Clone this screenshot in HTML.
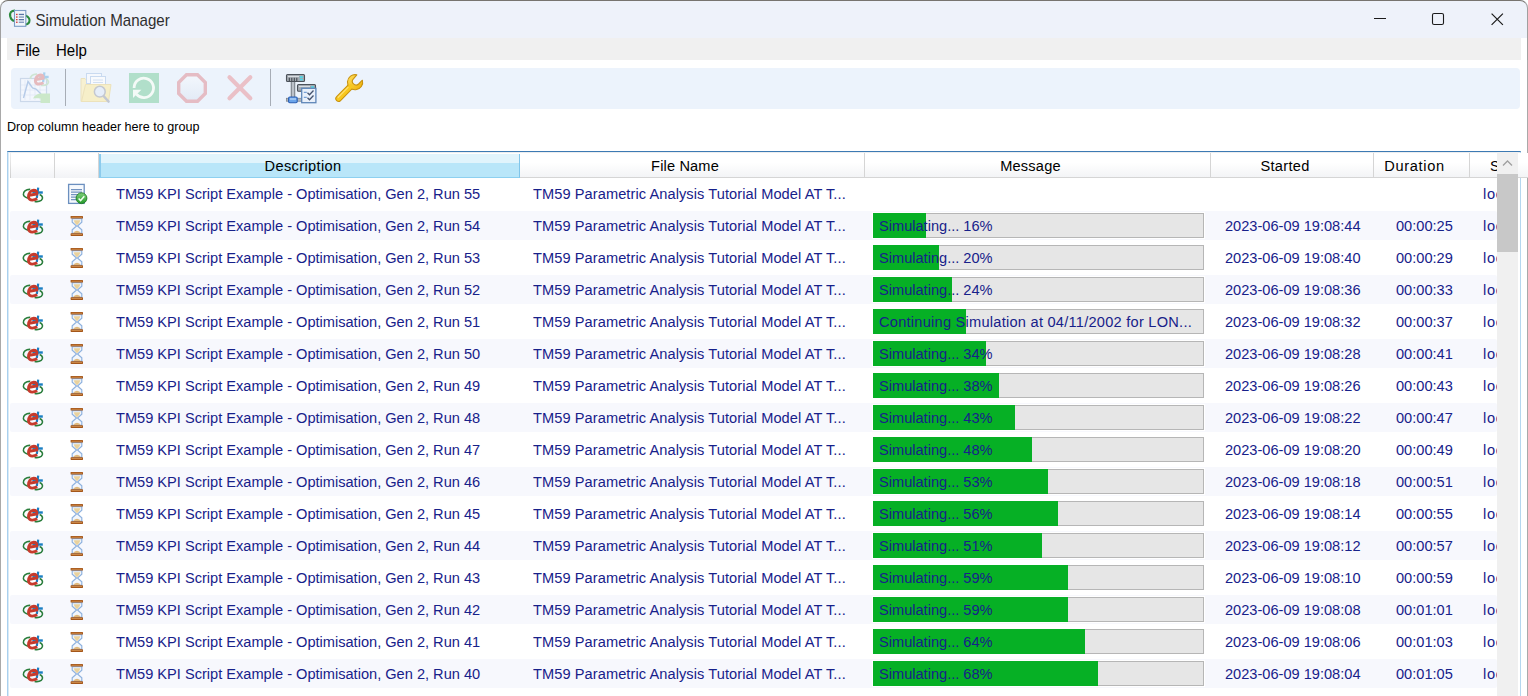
<!DOCTYPE html><html><head><meta charset="utf-8"><title>Simulation Manager</title><style>*{margin:0;padding:0;box-sizing:border-box}
html,body{width:1528px;height:696px;overflow:hidden;background:#fff;font-family:"Liberation Sans",sans-serif}
#win{position:absolute;left:0;top:0;width:1528px;height:696px;background:#fff;overflow:hidden}
#bl{position:absolute;left:0;top:8px;width:1px;height:700px;background:#a9a9a9}
#br{position:absolute;left:1527px;top:8px;width:1px;height:700px;background:#a9a9a9}
#title{position:absolute;left:0;top:0;width:1528px;height:38px;background:#eef2fa;border-radius:8px 8px 0 0}
#ttop{position:absolute;left:0;top:0;width:1528px;height:60px;border:1px solid #a0a0a0;border-top-color:#77746f;border-bottom:none;border-radius:8px 8px 0 0}
.appicon{position:absolute;left:0;top:0}
.ttext{position:absolute;left:35.5px;top:5px;font-size:15.1px;line-height:32px;color:#2e2e2e;white-space:nowrap;transform:scaleY(1.06);transform-origin:0 21px}
.wc{position:absolute}
#menu{position:absolute;left:7px;top:38px;width:1514px;height:22px;background:#f0f0f0}
#menu span{position:absolute;top:-3px;font-size:15px;line-height:32px;color:#000;white-space:nowrap;transform:scaleY(1.06);transform-origin:0 21px}
#tb{position:absolute;left:11px;top:68px;width:1509px;height:41px;background:#ecf3fc;border-radius:4px}
#drop{position:absolute;left:7px;top:113px;font-size:12.6px;line-height:28px;color:#000;white-space:nowrap;transform:scaleY(1.06);transform-origin:0 19px}
#gtop{position:absolute;left:7px;top:151px;width:1514px;height:1px;background:#3d7ab3;border-radius:2px 2px 0 0}
#gl{position:absolute;left:7px;top:152px;width:2px;height:560px;background:linear-gradient(90deg,#a9d0ee 0,#a9d0ee 50%,#d8eaf7 50%)}
#gr{position:absolute;left:1520px;top:152px;width:1px;height:560px;background:#b5d6ef}
.hc{position:absolute;top:153px;height:25px;background:linear-gradient(#ffffff 0,#ffffff 40%,#f3f4f6 100%);border-right:1px solid #d5d5d5;border-bottom:1px solid #d5d5d5}
.hc span{position:absolute;left:0;right:14px;top:-3px;text-align:center;font-size:14.6px;line-height:32px;color:#000;white-space:nowrap;transform:scaleY(1.06);transform-origin:0 21px}
.hc.sel{background:linear-gradient(#e1f4fc 0,#e1f4fc 9px,#b9e6f9 9px,#b9e6f9 100%);border-left:2px solid #8ccbed;border-right:1px solid #80c5ea;border-bottom:1px solid #8dd0f0;top:154px;height:24px}
.hc.sel span{top:-4px}
.row{position:absolute;left:10px;width:1487px;height:32px}
.row.alt::before{content:"";position:absolute;left:0;right:0;top:1px;height:29px;background:#f7f8fd;border-radius:2px}
.t{position:absolute;top:0px;font-size:14.6px;line-height:32px;color:#17218a;white-space:nowrap;transform:scaleY(1.06);transform-origin:0 21px}
.desc{left:106px}
.fn{left:523px;letter-spacing:0.08px}
.st{left:1215px}
.du{left:1386px}
.lo{left:1473px;letter-spacing:0.7px}
.ic0{position:absolute;left:8px;top:4px;width:32px;height:24px}
.ic1{position:absolute;left:52px;top:2px;width:32px;height:28px}
.ic1.hg{left:54px;top:2px}
.pb{position:absolute;left:863px;top:3px;width:331px;height:25px;background:#e6e6e6;border:1px solid #b6b6b6;box-shadow:0 0 0 1px #fff}
.pg{position:absolute;left:-1px;top:-1px;height:25px;background:#06b025}
.pt{position:absolute;left:5px;top:-4px;font-size:14.6px;line-height:32px;color:#17218a;white-space:nowrap;transform:scaleY(1.06);transform-origin:0 21px}
#sb{position:absolute;left:1497px;top:152px;width:21px;height:560px;background:#f0f0f0}
#thumb{position:absolute;left:0;top:22px;width:21px;height:78px;background:#c8c8c8}
.pt.wide{letter-spacing:0.25px}
.hc span.s{left:auto;right:auto;left:20px;text-align:left}
#hline{position:absolute;left:9px;top:152px;width:1511px;height:1px;background:#ebedef}
.hc.nb{border-bottom:none;background:linear-gradient(#ffffff 0,#ffffff 40%,#f2f3f6 100%)}
#sep0{position:absolute;left:10px;top:153px;width:1px;height:25px;background:linear-gradient(#f0f0f0,#cfcfcf)}
</style></head><body><div id="win"><div id="bl"></div><div id="br"></div><div id="title"><svg class="appicon" width="40" height="38" viewBox="0 0 40 38"><path d="M15 10.6C11 10.6 9.6 13 10.2 16.2C10.8 18.8 12.6 20.6 14.5 21" fill="none" stroke="#2b8a3e" stroke-width="2.2"/><path d="M25.5 15.5C29 17 30.2 19.8 29.2 22.2C28.2 24.6 24.5 25.2 20 24.6" fill="none" stroke="#2b8a3e" stroke-width="2.2"/><rect x="14.5" y="10.5" width="11.3" height="15.8" fill="#f2f6fb" stroke="#7b9cc6" stroke-width="1.1"/><rect x="16" y="13.8" width="1.6" height="1.3" fill="#d23c3c"/><rect x="18.8" y="13.8" width="5.2" height="1.3" fill="#5876a6"/><rect x="16" y="16.4" width="1.6" height="1.3" fill="#d23c3c"/><rect x="18.8" y="16.4" width="5.2" height="1.3" fill="#7d95bb"/><rect x="16" y="19" width="1.6" height="1.3" fill="#d23c3c"/><rect x="18.8" y="19" width="5.2" height="1.3" fill="#5876a6"/><rect x="16" y="21.6" width="1.6" height="1.3" fill="#d23c3c"/><rect x="18.8" y="21.6" width="5.2" height="1.3" fill="#7d95bb"/></svg><span class="ttext">Simulation Manager</span><svg class="wc" style="left:1373px;top:12px" width="14" height="14"><line x1="1" y1="6.5" x2="13" y2="6.5" stroke="#1b1b1b" stroke-width="1"/></svg><svg class="wc" style="left:1431px;top:12px" width="15" height="15"><rect x="1.5" y="1.5" width="11" height="11" rx="1.6" fill="none" stroke="#1b1b1b" stroke-width="1.1"/></svg><svg class="wc" style="left:1490px;top:12px" width="15" height="15"><path d="M1.6 1.6L12.9 12.9M12.9 1.6L1.6 12.9" stroke="#1b1b1b" stroke-width="1.2"/></svg></div><div id="ttop"></div><div id="menu"><span style="left:9px">File</span><span style="left:49px">Help</span></div><div id="tb"></div>
<svg id="tbsvg" width="400" height="50" viewBox="0 64 400 50" style="position:absolute;left:0;top:64px">
<defs>
<linearGradient id="srv" x1="0" y1="0" x2="0" y2="1"><stop offset="0" stop-color="#dfe3e8"/><stop offset="1" stop-color="#9aa1aa"/></linearGradient>
<linearGradient id="wr" x1="0" y1="0" x2="1" y2="1"><stop offset="0" stop-color="#ffe060"/><stop offset="1" stop-color="#f0b000"/></linearGradient>
</defs>
<!-- chart icon (disabled) -->
<rect x="20.5" y="78.5" width="26" height="23" fill="#f3f7fd" stroke="#cbd8ea" stroke-width="1.2"/>
<path d="M25 80V100M30 80V100M35 80V100M40 80V100M21 85H46M21 90H46M21 95H46" stroke="#e1e9f5" stroke-width="0.8"/>
<path d="M23.5 98L28 81.5L32.5 88L36 89L41 94" fill="none" stroke="#b6cbe8" stroke-width="1.4"/>
<g transform="translate(25.6 67.2) scale(0.93)">
<path d="M12.2 7.4C8 7.2 4.8 9.6 5.4 12.6M21.6 12.6C24.8 13.8 25.4 16.6 23.2 18.4C21.6 19.5 19.2 19.8 16.6 19.4" stroke="#cfe5d3" stroke-width="2" fill="none"/>
<ellipse cx="16.4" cy="10.6" rx="2" ry="1.3" fill="#b0d4ee"/>
<path d="M20.2 5.6L18.8 16.2" stroke="#a9d1ee" stroke-width="2.4" fill="none"/><path d="M19 10.5H24.8" stroke="#a9d1ee" stroke-width="2.6" fill="none"/>
<path d="M11.2 13.3L18.8 11.9C19.4 9.1 17.6 8.3 15.8 8.3C12.5 8.5 10.5 11.5 10.5 14.6C10.5 17.4 12.6 18.2 14.4 18.1C16 18 17.6 17.5 19.2 16.7" stroke="#e6babd" stroke-width="3.2" fill="none"/>
</g>
<path d="M33 98.5C34.5 95 38 93.5 41 93.5H50V103H40.5V98.5C37.5 98.2 35 98.3 33 98.5Z" fill="#cbe8c9"/>
<line x1="65.5" y1="69" x2="65.5" y2="106" stroke="#a7adb6" stroke-width="1"/>
<!-- folder search (disabled) -->
<path d="M81 78.5H85L86.5 80H100V101.5H81Z" fill="#f7f1d2" stroke="#ebe2bf" stroke-width="1"/>
<rect x="86.5" y="73.5" width="15" height="10" fill="#f5f8fd" stroke="#c9daf0" stroke-width="1"/>
<rect x="90.5" y="76.5" width="15" height="9" fill="#f8fafd" stroke="#c9daf0" stroke-width="1"/>
<path d="M93 80H103M93 82.5H103" stroke="#d2e0f2" stroke-width="1"/>
<path d="M85.5 84.5H111L108.5 101.5H81.5Z" fill="#f6efc9" stroke="#ece2bb" stroke-width="1"/>
<path d="M104 96.5L108.5 101.5" stroke="#c3c8d2" stroke-width="2.6" stroke-linecap="round"/>
<circle cx="99.8" cy="91.7" r="5.4" fill="#e6eef9" stroke="#c4c8d0" stroke-width="1.5"/>
<!-- refresh (disabled) -->
<rect x="129" y="73" width="30" height="30" fill="#b1dfca"/>
<path d="M134.1 88A9.7 9.7 0 1 1 136.4 94.2" fill="none" stroke="#f4faf7" stroke-width="2.8"/>
<path d="M133 98L133 89.8L141.4 89.8Z" fill="#f4faf7"/>
<!-- stop (disabled) -->
<defs><linearGradient id="oct" x1="0" y1="0" x2="0" y2="1"><stop offset="0" stop-color="#f3f7fd"/><stop offset="1" stop-color="#e2eaf6"/></linearGradient></defs>
<path d="M186.5 74.7H197.5L205.3 82.5V93.5L197.5 101.3H186.5L178.7 93.5V82.5Z" fill="url(#oct)" stroke="#e5bcc4" stroke-width="3.4" stroke-linejoin="miter"/>
<!-- X (disabled) -->
<path d="M229.5 77.3L250.3 98.3M250.3 77.3L229.5 98.3" stroke="#eac0c7" stroke-width="4.2" stroke-linecap="round"/>
<line x1="270.5" y1="69" x2="270.5" y2="106" stroke="#a7adb6" stroke-width="1"/>
<!-- network icon -->
<rect x="291.2" y="81" width="3.6" height="17" fill="#bcc2ca" stroke="#5d636b" stroke-width="0.8"/>
<rect x="286.3" y="98.2" width="16" height="3" fill="#b0b6be" stroke="#6d737b" stroke-width="0.6"/>
<rect x="286.5" y="74.5" width="18" height="7" rx="1" fill="#a3a9b1" stroke="#4c525a" stroke-width="1.1"/>
<rect x="288" y="76" width="11" height="1.1" fill="#dadee2"/>
<path d="M289.3 77.8V81M291.8 77.8V81M294.3 77.8V81M296.8 77.8V81" stroke="#3a4046" stroke-width="1"/>
<rect x="299.8" y="76.2" width="3" height="1.8" fill="#4fd8e8"/><rect x="299.8" y="78.8" width="3" height="1.6" fill="#4fd8e8"/>
<rect x="288.6" y="97" width="8.6" height="5.8" rx="1.2" fill="#6aa4ea" stroke="#2a5fb4" stroke-width="1.1"/>
<rect x="290" y="98.2" width="6" height="1.6" fill="#a8ccf6"/>
<rect x="297.5" y="84.5" width="18" height="6.8" rx="1" fill="#a3a9b1" stroke="#4c525a" stroke-width="1.1"/>
<rect x="299" y="86" width="11" height="1.1" fill="#dadee2"/>
<rect x="311" y="86.2" width="3" height="1.6" fill="#4fd8e8"/>
<rect x="301.7" y="88.3" width="14.2" height="14.4" fill="#e9f0fa" stroke="#5f86b8" stroke-width="1.3"/>
<path d="M303.8 92.3H306.8M303.8 97.3H306.8" stroke="#5b8ccc" stroke-width="1"/>
<path d="M307.5 92.8L309.5 94.8L313.5 90.5M307.5 97.8L309.5 99.8L313.5 95.5" stroke="#46536e" stroke-width="1.3" fill="none"/>
<!-- wrench -->
<line x1="338.6" y1="98.6" x2="350" y2="87" stroke="#c8920f" stroke-width="6.6" stroke-linecap="round"/>
<path d="M356.8 74.8A7.6 7.6 0 1 0 362.4 80.2L358.6 84A3.68 3.68 0 0 1 353.4 78.8Z" fill="url(#wr)" stroke="#c8920f" stroke-width="1.1" stroke-linejoin="round"/>
<line x1="338.6" y1="98.6" x2="350.5" y2="86.5" stroke="#f8c820" stroke-width="4.6" stroke-linecap="round"/>
<line x1="338.2" y1="97.2" x2="348" y2="87.4" stroke="#ffe070" stroke-width="1.3" stroke-linecap="round"/>
</svg>
<div id="drop">Drop column header here to group</div><div id="gtop"></div><div id="hline"></div><div id="gl"></div><div id="gr"></div><div class="hc nb" style="left:10px;width:45px"></div><div class="hc nb" style="left:55px;width:44px"></div><div class="hc sel" style="left:99px;width:421px"><span style="letter-spacing:0.35px">Description</span></div><div class="hc" style="left:520px;width:345px"><span style="letter-spacing:0.15px">File Name</span></div><div class="hc" style="left:865px;width:346px"><span style="letter-spacing:0.2px">Message</span></div><div class="hc" style="left:1211px;width:163px"><span style="letter-spacing:0.3px">Started</span></div><div class="hc" style="left:1374px;width:96px"><span style="letter-spacing:0.65px">Duration</span></div><div class="hc" style="left:1470px;width:61px"><span class="s">S</span></div><div id="sep0"></div><div class="row" style="top:178px"><div class="ic0"><svg width="32" height="24" viewBox="0 0 32 24"><path d="M12.2 7.4C8 7.2 4.8 9.6 5.4 12.6C5.8 14.4 7.8 15.6 10.4 16.2M21.6 12.6C24.8 13.8 25.4 16.6 23.2 18.4C21.6 19.5 19.2 19.8 16.6 19.4" stroke="#2a7d3c" stroke-width="1.6" fill="none"/><ellipse cx="16.4" cy="10.6" rx="2" ry="1.3" fill="#1f7fc0"/><path d="M20.2 5.6L18.8 16.2" stroke="#1a7ec2" stroke-width="2.2" fill="none"/><path d="M19 10.5H24.8" stroke="#1a7ec2" stroke-width="2.4" fill="none"/><path d="M11.2 13.3L18.8 11.9C19.4 9.1 17.6 8.3 15.8 8.3C12.5 8.5 10.5 11.5 10.5 14.6C10.5 17.4 12.6 18.2 14.4 18.1C16 18 17.6 17.5 19.2 16.7" stroke="#c63a2c" stroke-width="2.9" fill="none"/></svg>
</div><div class="ic1"><svg width="32" height="28" viewBox="0 0 32 28"><defs><linearGradient id="gc" x1="0" y1="0" x2="0" y2="1"><stop offset="0" stop-color="#7fd07a"/><stop offset="1" stop-color="#249a2a"/></linearGradient></defs><rect x="6.6" y="4.4" width="15.6" height="19" fill="#f6f9fd" stroke="#6b8fbf" stroke-width="1.3"/><path d="M9 9.6H20M9 12.1H20M9 14.6H20M9 17.1H20M9 19.6H20" stroke="#7393c0" stroke-width="1.1"/><circle cx="19.5" cy="18.2" r="5.4" fill="url(#gc)" stroke="#1f7a22" stroke-width="0.9"/><path d="M16.6 18.4L18.6 20.6L22.3 16.2" stroke="#f2fff0" stroke-width="1.5" fill="none"/></svg>
</div><div class="t desc">TM59 KPI Script Example - Optimisation, Gen 2, Run 55</div><div class="t fn">TM59 Parametric Analysis Tutorial Model AT T...</div><div class="t lo">local</div></div><div class="row alt" style="top:210px"><div class="ic0"><svg width="32" height="24" viewBox="0 0 32 24"><path d="M12.2 7.4C8 7.2 4.8 9.6 5.4 12.6C5.8 14.4 7.8 15.6 10.4 16.2M21.6 12.6C24.8 13.8 25.4 16.6 23.2 18.4C21.6 19.5 19.2 19.8 16.6 19.4" stroke="#2a7d3c" stroke-width="1.6" fill="none"/><ellipse cx="16.4" cy="10.6" rx="2" ry="1.3" fill="#1f7fc0"/><path d="M20.2 5.6L18.8 16.2" stroke="#1a7ec2" stroke-width="2.2" fill="none"/><path d="M19 10.5H24.8" stroke="#1a7ec2" stroke-width="2.4" fill="none"/><path d="M11.2 13.3L18.8 11.9C19.4 9.1 17.6 8.3 15.8 8.3C12.5 8.5 10.5 11.5 10.5 14.6C10.5 17.4 12.6 18.2 14.4 18.1C16 18 17.6 17.5 19.2 16.7" stroke="#c63a2c" stroke-width="2.9" fill="none"/></svg>
</div><div class="ic1 hg"><svg width="26" height="28" viewBox="0 0 26 28"><path d="M8.2 6.6V10.2L12.5 14L8.2 17.8V21.4H17.8V17.8L13.5 14L17.8 10.2V6.6Z" fill="#f2f6fc" stroke="#8fb2de" stroke-width="1.2"/><path d="M9.6 8.2H16.4Q15.8 11 13 13.2Q10.2 11 9.6 8.2Z" fill="#e9d29e"/><path d="M9.2 21.2Q10.2 18.9 13 18.7Q15.8 18.9 16.8 21.2Z" fill="#dfb87c"/><rect x="6.6" y="4" width="12.4" height="2.6" rx="0.6" fill="#a4561a"/><rect x="7.5" y="4.8" width="10.6" height="0.9" fill="#cf8c4a"/><rect x="6.6" y="21.3" width="12.4" height="2.6" rx="0.6" fill="#a4561a"/><rect x="7.5" y="22.1" width="10.6" height="0.9" fill="#cf8c4a"/></svg>
</div><div class="t desc">TM59 KPI Script Example - Optimisation, Gen 2, Run 54</div><div class="t fn">TM59 Parametric Analysis Tutorial Model AT T...</div><div class="pb"><div class="pg" style="width:53px"></div><div class="pt">Simulating... 16%</div></div><div class="t st">2023-06-09 19:08:44</div><div class="t du">00:00:25</div><div class="t lo">local</div></div><div class="row" style="top:242px"><div class="ic0"><svg width="32" height="24" viewBox="0 0 32 24"><path d="M12.2 7.4C8 7.2 4.8 9.6 5.4 12.6C5.8 14.4 7.8 15.6 10.4 16.2M21.6 12.6C24.8 13.8 25.4 16.6 23.2 18.4C21.6 19.5 19.2 19.8 16.6 19.4" stroke="#2a7d3c" stroke-width="1.6" fill="none"/><ellipse cx="16.4" cy="10.6" rx="2" ry="1.3" fill="#1f7fc0"/><path d="M20.2 5.6L18.8 16.2" stroke="#1a7ec2" stroke-width="2.2" fill="none"/><path d="M19 10.5H24.8" stroke="#1a7ec2" stroke-width="2.4" fill="none"/><path d="M11.2 13.3L18.8 11.9C19.4 9.1 17.6 8.3 15.8 8.3C12.5 8.5 10.5 11.5 10.5 14.6C10.5 17.4 12.6 18.2 14.4 18.1C16 18 17.6 17.5 19.2 16.7" stroke="#c63a2c" stroke-width="2.9" fill="none"/></svg>
</div><div class="ic1 hg"><svg width="26" height="28" viewBox="0 0 26 28"><path d="M8.2 6.6V10.2L12.5 14L8.2 17.8V21.4H17.8V17.8L13.5 14L17.8 10.2V6.6Z" fill="#f2f6fc" stroke="#8fb2de" stroke-width="1.2"/><path d="M9.6 8.2H16.4Q15.8 11 13 13.2Q10.2 11 9.6 8.2Z" fill="#e9d29e"/><path d="M9.2 21.2Q10.2 18.9 13 18.7Q15.8 18.9 16.8 21.2Z" fill="#dfb87c"/><rect x="6.6" y="4" width="12.4" height="2.6" rx="0.6" fill="#a4561a"/><rect x="7.5" y="4.8" width="10.6" height="0.9" fill="#cf8c4a"/><rect x="6.6" y="21.3" width="12.4" height="2.6" rx="0.6" fill="#a4561a"/><rect x="7.5" y="22.1" width="10.6" height="0.9" fill="#cf8c4a"/></svg>
</div><div class="t desc">TM59 KPI Script Example - Optimisation, Gen 2, Run 53</div><div class="t fn">TM59 Parametric Analysis Tutorial Model AT T...</div><div class="pb"><div class="pg" style="width:66px"></div><div class="pt">Simulating... 20%</div></div><div class="t st">2023-06-09 19:08:40</div><div class="t du">00:00:29</div><div class="t lo">local</div></div><div class="row alt" style="top:274px"><div class="ic0"><svg width="32" height="24" viewBox="0 0 32 24"><path d="M12.2 7.4C8 7.2 4.8 9.6 5.4 12.6C5.8 14.4 7.8 15.6 10.4 16.2M21.6 12.6C24.8 13.8 25.4 16.6 23.2 18.4C21.6 19.5 19.2 19.8 16.6 19.4" stroke="#2a7d3c" stroke-width="1.6" fill="none"/><ellipse cx="16.4" cy="10.6" rx="2" ry="1.3" fill="#1f7fc0"/><path d="M20.2 5.6L18.8 16.2" stroke="#1a7ec2" stroke-width="2.2" fill="none"/><path d="M19 10.5H24.8" stroke="#1a7ec2" stroke-width="2.4" fill="none"/><path d="M11.2 13.3L18.8 11.9C19.4 9.1 17.6 8.3 15.8 8.3C12.5 8.5 10.5 11.5 10.5 14.6C10.5 17.4 12.6 18.2 14.4 18.1C16 18 17.6 17.5 19.2 16.7" stroke="#c63a2c" stroke-width="2.9" fill="none"/></svg>
</div><div class="ic1 hg"><svg width="26" height="28" viewBox="0 0 26 28"><path d="M8.2 6.6V10.2L12.5 14L8.2 17.8V21.4H17.8V17.8L13.5 14L17.8 10.2V6.6Z" fill="#f2f6fc" stroke="#8fb2de" stroke-width="1.2"/><path d="M9.6 8.2H16.4Q15.8 11 13 13.2Q10.2 11 9.6 8.2Z" fill="#e9d29e"/><path d="M9.2 21.2Q10.2 18.9 13 18.7Q15.8 18.9 16.8 21.2Z" fill="#dfb87c"/><rect x="6.6" y="4" width="12.4" height="2.6" rx="0.6" fill="#a4561a"/><rect x="7.5" y="4.8" width="10.6" height="0.9" fill="#cf8c4a"/><rect x="6.6" y="21.3" width="12.4" height="2.6" rx="0.6" fill="#a4561a"/><rect x="7.5" y="22.1" width="10.6" height="0.9" fill="#cf8c4a"/></svg>
</div><div class="t desc">TM59 KPI Script Example - Optimisation, Gen 2, Run 52</div><div class="t fn">TM59 Parametric Analysis Tutorial Model AT T...</div><div class="pb"><div class="pg" style="width:79px"></div><div class="pt">Simulating... 24%</div></div><div class="t st">2023-06-09 19:08:36</div><div class="t du">00:00:33</div><div class="t lo">local</div></div><div class="row" style="top:306px"><div class="ic0"><svg width="32" height="24" viewBox="0 0 32 24"><path d="M12.2 7.4C8 7.2 4.8 9.6 5.4 12.6C5.8 14.4 7.8 15.6 10.4 16.2M21.6 12.6C24.8 13.8 25.4 16.6 23.2 18.4C21.6 19.5 19.2 19.8 16.6 19.4" stroke="#2a7d3c" stroke-width="1.6" fill="none"/><ellipse cx="16.4" cy="10.6" rx="2" ry="1.3" fill="#1f7fc0"/><path d="M20.2 5.6L18.8 16.2" stroke="#1a7ec2" stroke-width="2.2" fill="none"/><path d="M19 10.5H24.8" stroke="#1a7ec2" stroke-width="2.4" fill="none"/><path d="M11.2 13.3L18.8 11.9C19.4 9.1 17.6 8.3 15.8 8.3C12.5 8.5 10.5 11.5 10.5 14.6C10.5 17.4 12.6 18.2 14.4 18.1C16 18 17.6 17.5 19.2 16.7" stroke="#c63a2c" stroke-width="2.9" fill="none"/></svg>
</div><div class="ic1 hg"><svg width="26" height="28" viewBox="0 0 26 28"><path d="M8.2 6.6V10.2L12.5 14L8.2 17.8V21.4H17.8V17.8L13.5 14L17.8 10.2V6.6Z" fill="#f2f6fc" stroke="#8fb2de" stroke-width="1.2"/><path d="M9.6 8.2H16.4Q15.8 11 13 13.2Q10.2 11 9.6 8.2Z" fill="#e9d29e"/><path d="M9.2 21.2Q10.2 18.9 13 18.7Q15.8 18.9 16.8 21.2Z" fill="#dfb87c"/><rect x="6.6" y="4" width="12.4" height="2.6" rx="0.6" fill="#a4561a"/><rect x="7.5" y="4.8" width="10.6" height="0.9" fill="#cf8c4a"/><rect x="6.6" y="21.3" width="12.4" height="2.6" rx="0.6" fill="#a4561a"/><rect x="7.5" y="22.1" width="10.6" height="0.9" fill="#cf8c4a"/></svg>
</div><div class="t desc">TM59 KPI Script Example - Optimisation, Gen 2, Run 51</div><div class="t fn">TM59 Parametric Analysis Tutorial Model AT T...</div><div class="pb"><div class="pg" style="width:93px"></div><div class="pt wide">Continuing Simulation at 04/11/2002 for LON...</div></div><div class="t st">2023-06-09 19:08:32</div><div class="t du">00:00:37</div><div class="t lo">local</div></div><div class="row alt" style="top:338px"><div class="ic0"><svg width="32" height="24" viewBox="0 0 32 24"><path d="M12.2 7.4C8 7.2 4.8 9.6 5.4 12.6C5.8 14.4 7.8 15.6 10.4 16.2M21.6 12.6C24.8 13.8 25.4 16.6 23.2 18.4C21.6 19.5 19.2 19.8 16.6 19.4" stroke="#2a7d3c" stroke-width="1.6" fill="none"/><ellipse cx="16.4" cy="10.6" rx="2" ry="1.3" fill="#1f7fc0"/><path d="M20.2 5.6L18.8 16.2" stroke="#1a7ec2" stroke-width="2.2" fill="none"/><path d="M19 10.5H24.8" stroke="#1a7ec2" stroke-width="2.4" fill="none"/><path d="M11.2 13.3L18.8 11.9C19.4 9.1 17.6 8.3 15.8 8.3C12.5 8.5 10.5 11.5 10.5 14.6C10.5 17.4 12.6 18.2 14.4 18.1C16 18 17.6 17.5 19.2 16.7" stroke="#c63a2c" stroke-width="2.9" fill="none"/></svg>
</div><div class="ic1 hg"><svg width="26" height="28" viewBox="0 0 26 28"><path d="M8.2 6.6V10.2L12.5 14L8.2 17.8V21.4H17.8V17.8L13.5 14L17.8 10.2V6.6Z" fill="#f2f6fc" stroke="#8fb2de" stroke-width="1.2"/><path d="M9.6 8.2H16.4Q15.8 11 13 13.2Q10.2 11 9.6 8.2Z" fill="#e9d29e"/><path d="M9.2 21.2Q10.2 18.9 13 18.7Q15.8 18.9 16.8 21.2Z" fill="#dfb87c"/><rect x="6.6" y="4" width="12.4" height="2.6" rx="0.6" fill="#a4561a"/><rect x="7.5" y="4.8" width="10.6" height="0.9" fill="#cf8c4a"/><rect x="6.6" y="21.3" width="12.4" height="2.6" rx="0.6" fill="#a4561a"/><rect x="7.5" y="22.1" width="10.6" height="0.9" fill="#cf8c4a"/></svg>
</div><div class="t desc">TM59 KPI Script Example - Optimisation, Gen 2, Run 50</div><div class="t fn">TM59 Parametric Analysis Tutorial Model AT T...</div><div class="pb"><div class="pg" style="width:113px"></div><div class="pt">Simulating... 34%</div></div><div class="t st">2023-06-09 19:08:28</div><div class="t du">00:00:41</div><div class="t lo">local</div></div><div class="row" style="top:370px"><div class="ic0"><svg width="32" height="24" viewBox="0 0 32 24"><path d="M12.2 7.4C8 7.2 4.8 9.6 5.4 12.6C5.8 14.4 7.8 15.6 10.4 16.2M21.6 12.6C24.8 13.8 25.4 16.6 23.2 18.4C21.6 19.5 19.2 19.8 16.6 19.4" stroke="#2a7d3c" stroke-width="1.6" fill="none"/><ellipse cx="16.4" cy="10.6" rx="2" ry="1.3" fill="#1f7fc0"/><path d="M20.2 5.6L18.8 16.2" stroke="#1a7ec2" stroke-width="2.2" fill="none"/><path d="M19 10.5H24.8" stroke="#1a7ec2" stroke-width="2.4" fill="none"/><path d="M11.2 13.3L18.8 11.9C19.4 9.1 17.6 8.3 15.8 8.3C12.5 8.5 10.5 11.5 10.5 14.6C10.5 17.4 12.6 18.2 14.4 18.1C16 18 17.6 17.5 19.2 16.7" stroke="#c63a2c" stroke-width="2.9" fill="none"/></svg>
</div><div class="ic1 hg"><svg width="26" height="28" viewBox="0 0 26 28"><path d="M8.2 6.6V10.2L12.5 14L8.2 17.8V21.4H17.8V17.8L13.5 14L17.8 10.2V6.6Z" fill="#f2f6fc" stroke="#8fb2de" stroke-width="1.2"/><path d="M9.6 8.2H16.4Q15.8 11 13 13.2Q10.2 11 9.6 8.2Z" fill="#e9d29e"/><path d="M9.2 21.2Q10.2 18.9 13 18.7Q15.8 18.9 16.8 21.2Z" fill="#dfb87c"/><rect x="6.6" y="4" width="12.4" height="2.6" rx="0.6" fill="#a4561a"/><rect x="7.5" y="4.8" width="10.6" height="0.9" fill="#cf8c4a"/><rect x="6.6" y="21.3" width="12.4" height="2.6" rx="0.6" fill="#a4561a"/><rect x="7.5" y="22.1" width="10.6" height="0.9" fill="#cf8c4a"/></svg>
</div><div class="t desc">TM59 KPI Script Example - Optimisation, Gen 2, Run 49</div><div class="t fn">TM59 Parametric Analysis Tutorial Model AT T...</div><div class="pb"><div class="pg" style="width:126px"></div><div class="pt">Simulating... 38%</div></div><div class="t st">2023-06-09 19:08:26</div><div class="t du">00:00:43</div><div class="t lo">local</div></div><div class="row alt" style="top:402px"><div class="ic0"><svg width="32" height="24" viewBox="0 0 32 24"><path d="M12.2 7.4C8 7.2 4.8 9.6 5.4 12.6C5.8 14.4 7.8 15.6 10.4 16.2M21.6 12.6C24.8 13.8 25.4 16.6 23.2 18.4C21.6 19.5 19.2 19.8 16.6 19.4" stroke="#2a7d3c" stroke-width="1.6" fill="none"/><ellipse cx="16.4" cy="10.6" rx="2" ry="1.3" fill="#1f7fc0"/><path d="M20.2 5.6L18.8 16.2" stroke="#1a7ec2" stroke-width="2.2" fill="none"/><path d="M19 10.5H24.8" stroke="#1a7ec2" stroke-width="2.4" fill="none"/><path d="M11.2 13.3L18.8 11.9C19.4 9.1 17.6 8.3 15.8 8.3C12.5 8.5 10.5 11.5 10.5 14.6C10.5 17.4 12.6 18.2 14.4 18.1C16 18 17.6 17.5 19.2 16.7" stroke="#c63a2c" stroke-width="2.9" fill="none"/></svg>
</div><div class="ic1 hg"><svg width="26" height="28" viewBox="0 0 26 28"><path d="M8.2 6.6V10.2L12.5 14L8.2 17.8V21.4H17.8V17.8L13.5 14L17.8 10.2V6.6Z" fill="#f2f6fc" stroke="#8fb2de" stroke-width="1.2"/><path d="M9.6 8.2H16.4Q15.8 11 13 13.2Q10.2 11 9.6 8.2Z" fill="#e9d29e"/><path d="M9.2 21.2Q10.2 18.9 13 18.7Q15.8 18.9 16.8 21.2Z" fill="#dfb87c"/><rect x="6.6" y="4" width="12.4" height="2.6" rx="0.6" fill="#a4561a"/><rect x="7.5" y="4.8" width="10.6" height="0.9" fill="#cf8c4a"/><rect x="6.6" y="21.3" width="12.4" height="2.6" rx="0.6" fill="#a4561a"/><rect x="7.5" y="22.1" width="10.6" height="0.9" fill="#cf8c4a"/></svg>
</div><div class="t desc">TM59 KPI Script Example - Optimisation, Gen 2, Run 48</div><div class="t fn">TM59 Parametric Analysis Tutorial Model AT T...</div><div class="pb"><div class="pg" style="width:142px"></div><div class="pt">Simulating... 43%</div></div><div class="t st">2023-06-09 19:08:22</div><div class="t du">00:00:47</div><div class="t lo">local</div></div><div class="row" style="top:434px"><div class="ic0"><svg width="32" height="24" viewBox="0 0 32 24"><path d="M12.2 7.4C8 7.2 4.8 9.6 5.4 12.6C5.8 14.4 7.8 15.6 10.4 16.2M21.6 12.6C24.8 13.8 25.4 16.6 23.2 18.4C21.6 19.5 19.2 19.8 16.6 19.4" stroke="#2a7d3c" stroke-width="1.6" fill="none"/><ellipse cx="16.4" cy="10.6" rx="2" ry="1.3" fill="#1f7fc0"/><path d="M20.2 5.6L18.8 16.2" stroke="#1a7ec2" stroke-width="2.2" fill="none"/><path d="M19 10.5H24.8" stroke="#1a7ec2" stroke-width="2.4" fill="none"/><path d="M11.2 13.3L18.8 11.9C19.4 9.1 17.6 8.3 15.8 8.3C12.5 8.5 10.5 11.5 10.5 14.6C10.5 17.4 12.6 18.2 14.4 18.1C16 18 17.6 17.5 19.2 16.7" stroke="#c63a2c" stroke-width="2.9" fill="none"/></svg>
</div><div class="ic1 hg"><svg width="26" height="28" viewBox="0 0 26 28"><path d="M8.2 6.6V10.2L12.5 14L8.2 17.8V21.4H17.8V17.8L13.5 14L17.8 10.2V6.6Z" fill="#f2f6fc" stroke="#8fb2de" stroke-width="1.2"/><path d="M9.6 8.2H16.4Q15.8 11 13 13.2Q10.2 11 9.6 8.2Z" fill="#e9d29e"/><path d="M9.2 21.2Q10.2 18.9 13 18.7Q15.8 18.9 16.8 21.2Z" fill="#dfb87c"/><rect x="6.6" y="4" width="12.4" height="2.6" rx="0.6" fill="#a4561a"/><rect x="7.5" y="4.8" width="10.6" height="0.9" fill="#cf8c4a"/><rect x="6.6" y="21.3" width="12.4" height="2.6" rx="0.6" fill="#a4561a"/><rect x="7.5" y="22.1" width="10.6" height="0.9" fill="#cf8c4a"/></svg>
</div><div class="t desc">TM59 KPI Script Example - Optimisation, Gen 2, Run 47</div><div class="t fn">TM59 Parametric Analysis Tutorial Model AT T...</div><div class="pb"><div class="pg" style="width:159px"></div><div class="pt">Simulating... 48%</div></div><div class="t st">2023-06-09 19:08:20</div><div class="t du">00:00:49</div><div class="t lo">local</div></div><div class="row alt" style="top:466px"><div class="ic0"><svg width="32" height="24" viewBox="0 0 32 24"><path d="M12.2 7.4C8 7.2 4.8 9.6 5.4 12.6C5.8 14.4 7.8 15.6 10.4 16.2M21.6 12.6C24.8 13.8 25.4 16.6 23.2 18.4C21.6 19.5 19.2 19.8 16.6 19.4" stroke="#2a7d3c" stroke-width="1.6" fill="none"/><ellipse cx="16.4" cy="10.6" rx="2" ry="1.3" fill="#1f7fc0"/><path d="M20.2 5.6L18.8 16.2" stroke="#1a7ec2" stroke-width="2.2" fill="none"/><path d="M19 10.5H24.8" stroke="#1a7ec2" stroke-width="2.4" fill="none"/><path d="M11.2 13.3L18.8 11.9C19.4 9.1 17.6 8.3 15.8 8.3C12.5 8.5 10.5 11.5 10.5 14.6C10.5 17.4 12.6 18.2 14.4 18.1C16 18 17.6 17.5 19.2 16.7" stroke="#c63a2c" stroke-width="2.9" fill="none"/></svg>
</div><div class="ic1 hg"><svg width="26" height="28" viewBox="0 0 26 28"><path d="M8.2 6.6V10.2L12.5 14L8.2 17.8V21.4H17.8V17.8L13.5 14L17.8 10.2V6.6Z" fill="#f2f6fc" stroke="#8fb2de" stroke-width="1.2"/><path d="M9.6 8.2H16.4Q15.8 11 13 13.2Q10.2 11 9.6 8.2Z" fill="#e9d29e"/><path d="M9.2 21.2Q10.2 18.9 13 18.7Q15.8 18.9 16.8 21.2Z" fill="#dfb87c"/><rect x="6.6" y="4" width="12.4" height="2.6" rx="0.6" fill="#a4561a"/><rect x="7.5" y="4.8" width="10.6" height="0.9" fill="#cf8c4a"/><rect x="6.6" y="21.3" width="12.4" height="2.6" rx="0.6" fill="#a4561a"/><rect x="7.5" y="22.1" width="10.6" height="0.9" fill="#cf8c4a"/></svg>
</div><div class="t desc">TM59 KPI Script Example - Optimisation, Gen 2, Run 46</div><div class="t fn">TM59 Parametric Analysis Tutorial Model AT T...</div><div class="pb"><div class="pg" style="width:175px"></div><div class="pt">Simulating... 53%</div></div><div class="t st">2023-06-09 19:08:18</div><div class="t du">00:00:51</div><div class="t lo">local</div></div><div class="row" style="top:498px"><div class="ic0"><svg width="32" height="24" viewBox="0 0 32 24"><path d="M12.2 7.4C8 7.2 4.8 9.6 5.4 12.6C5.8 14.4 7.8 15.6 10.4 16.2M21.6 12.6C24.8 13.8 25.4 16.6 23.2 18.4C21.6 19.5 19.2 19.8 16.6 19.4" stroke="#2a7d3c" stroke-width="1.6" fill="none"/><ellipse cx="16.4" cy="10.6" rx="2" ry="1.3" fill="#1f7fc0"/><path d="M20.2 5.6L18.8 16.2" stroke="#1a7ec2" stroke-width="2.2" fill="none"/><path d="M19 10.5H24.8" stroke="#1a7ec2" stroke-width="2.4" fill="none"/><path d="M11.2 13.3L18.8 11.9C19.4 9.1 17.6 8.3 15.8 8.3C12.5 8.5 10.5 11.5 10.5 14.6C10.5 17.4 12.6 18.2 14.4 18.1C16 18 17.6 17.5 19.2 16.7" stroke="#c63a2c" stroke-width="2.9" fill="none"/></svg>
</div><div class="ic1 hg"><svg width="26" height="28" viewBox="0 0 26 28"><path d="M8.2 6.6V10.2L12.5 14L8.2 17.8V21.4H17.8V17.8L13.5 14L17.8 10.2V6.6Z" fill="#f2f6fc" stroke="#8fb2de" stroke-width="1.2"/><path d="M9.6 8.2H16.4Q15.8 11 13 13.2Q10.2 11 9.6 8.2Z" fill="#e9d29e"/><path d="M9.2 21.2Q10.2 18.9 13 18.7Q15.8 18.9 16.8 21.2Z" fill="#dfb87c"/><rect x="6.6" y="4" width="12.4" height="2.6" rx="0.6" fill="#a4561a"/><rect x="7.5" y="4.8" width="10.6" height="0.9" fill="#cf8c4a"/><rect x="6.6" y="21.3" width="12.4" height="2.6" rx="0.6" fill="#a4561a"/><rect x="7.5" y="22.1" width="10.6" height="0.9" fill="#cf8c4a"/></svg>
</div><div class="t desc">TM59 KPI Script Example - Optimisation, Gen 2, Run 45</div><div class="t fn">TM59 Parametric Analysis Tutorial Model AT T...</div><div class="pb"><div class="pg" style="width:185px"></div><div class="pt">Simulating... 56%</div></div><div class="t st">2023-06-09 19:08:14</div><div class="t du">00:00:55</div><div class="t lo">local</div></div><div class="row alt" style="top:530px"><div class="ic0"><svg width="32" height="24" viewBox="0 0 32 24"><path d="M12.2 7.4C8 7.2 4.8 9.6 5.4 12.6C5.8 14.4 7.8 15.6 10.4 16.2M21.6 12.6C24.8 13.8 25.4 16.6 23.2 18.4C21.6 19.5 19.2 19.8 16.6 19.4" stroke="#2a7d3c" stroke-width="1.6" fill="none"/><ellipse cx="16.4" cy="10.6" rx="2" ry="1.3" fill="#1f7fc0"/><path d="M20.2 5.6L18.8 16.2" stroke="#1a7ec2" stroke-width="2.2" fill="none"/><path d="M19 10.5H24.8" stroke="#1a7ec2" stroke-width="2.4" fill="none"/><path d="M11.2 13.3L18.8 11.9C19.4 9.1 17.6 8.3 15.8 8.3C12.5 8.5 10.5 11.5 10.5 14.6C10.5 17.4 12.6 18.2 14.4 18.1C16 18 17.6 17.5 19.2 16.7" stroke="#c63a2c" stroke-width="2.9" fill="none"/></svg>
</div><div class="ic1 hg"><svg width="26" height="28" viewBox="0 0 26 28"><path d="M8.2 6.6V10.2L12.5 14L8.2 17.8V21.4H17.8V17.8L13.5 14L17.8 10.2V6.6Z" fill="#f2f6fc" stroke="#8fb2de" stroke-width="1.2"/><path d="M9.6 8.2H16.4Q15.8 11 13 13.2Q10.2 11 9.6 8.2Z" fill="#e9d29e"/><path d="M9.2 21.2Q10.2 18.9 13 18.7Q15.8 18.9 16.8 21.2Z" fill="#dfb87c"/><rect x="6.6" y="4" width="12.4" height="2.6" rx="0.6" fill="#a4561a"/><rect x="7.5" y="4.8" width="10.6" height="0.9" fill="#cf8c4a"/><rect x="6.6" y="21.3" width="12.4" height="2.6" rx="0.6" fill="#a4561a"/><rect x="7.5" y="22.1" width="10.6" height="0.9" fill="#cf8c4a"/></svg>
</div><div class="t desc">TM59 KPI Script Example - Optimisation, Gen 2, Run 44</div><div class="t fn">TM59 Parametric Analysis Tutorial Model AT T...</div><div class="pb"><div class="pg" style="width:169px"></div><div class="pt">Simulating... 51%</div></div><div class="t st">2023-06-09 19:08:12</div><div class="t du">00:00:57</div><div class="t lo">local</div></div><div class="row" style="top:562px"><div class="ic0"><svg width="32" height="24" viewBox="0 0 32 24"><path d="M12.2 7.4C8 7.2 4.8 9.6 5.4 12.6C5.8 14.4 7.8 15.6 10.4 16.2M21.6 12.6C24.8 13.8 25.4 16.6 23.2 18.4C21.6 19.5 19.2 19.8 16.6 19.4" stroke="#2a7d3c" stroke-width="1.6" fill="none"/><ellipse cx="16.4" cy="10.6" rx="2" ry="1.3" fill="#1f7fc0"/><path d="M20.2 5.6L18.8 16.2" stroke="#1a7ec2" stroke-width="2.2" fill="none"/><path d="M19 10.5H24.8" stroke="#1a7ec2" stroke-width="2.4" fill="none"/><path d="M11.2 13.3L18.8 11.9C19.4 9.1 17.6 8.3 15.8 8.3C12.5 8.5 10.5 11.5 10.5 14.6C10.5 17.4 12.6 18.2 14.4 18.1C16 18 17.6 17.5 19.2 16.7" stroke="#c63a2c" stroke-width="2.9" fill="none"/></svg>
</div><div class="ic1 hg"><svg width="26" height="28" viewBox="0 0 26 28"><path d="M8.2 6.6V10.2L12.5 14L8.2 17.8V21.4H17.8V17.8L13.5 14L17.8 10.2V6.6Z" fill="#f2f6fc" stroke="#8fb2de" stroke-width="1.2"/><path d="M9.6 8.2H16.4Q15.8 11 13 13.2Q10.2 11 9.6 8.2Z" fill="#e9d29e"/><path d="M9.2 21.2Q10.2 18.9 13 18.7Q15.8 18.9 16.8 21.2Z" fill="#dfb87c"/><rect x="6.6" y="4" width="12.4" height="2.6" rx="0.6" fill="#a4561a"/><rect x="7.5" y="4.8" width="10.6" height="0.9" fill="#cf8c4a"/><rect x="6.6" y="21.3" width="12.4" height="2.6" rx="0.6" fill="#a4561a"/><rect x="7.5" y="22.1" width="10.6" height="0.9" fill="#cf8c4a"/></svg>
</div><div class="t desc">TM59 KPI Script Example - Optimisation, Gen 2, Run 43</div><div class="t fn">TM59 Parametric Analysis Tutorial Model AT T...</div><div class="pb"><div class="pg" style="width:195px"></div><div class="pt">Simulating... 59%</div></div><div class="t st">2023-06-09 19:08:10</div><div class="t du">00:00:59</div><div class="t lo">local</div></div><div class="row alt" style="top:594px"><div class="ic0"><svg width="32" height="24" viewBox="0 0 32 24"><path d="M12.2 7.4C8 7.2 4.8 9.6 5.4 12.6C5.8 14.4 7.8 15.6 10.4 16.2M21.6 12.6C24.8 13.8 25.4 16.6 23.2 18.4C21.6 19.5 19.2 19.8 16.6 19.4" stroke="#2a7d3c" stroke-width="1.6" fill="none"/><ellipse cx="16.4" cy="10.6" rx="2" ry="1.3" fill="#1f7fc0"/><path d="M20.2 5.6L18.8 16.2" stroke="#1a7ec2" stroke-width="2.2" fill="none"/><path d="M19 10.5H24.8" stroke="#1a7ec2" stroke-width="2.4" fill="none"/><path d="M11.2 13.3L18.8 11.9C19.4 9.1 17.6 8.3 15.8 8.3C12.5 8.5 10.5 11.5 10.5 14.6C10.5 17.4 12.6 18.2 14.4 18.1C16 18 17.6 17.5 19.2 16.7" stroke="#c63a2c" stroke-width="2.9" fill="none"/></svg>
</div><div class="ic1 hg"><svg width="26" height="28" viewBox="0 0 26 28"><path d="M8.2 6.6V10.2L12.5 14L8.2 17.8V21.4H17.8V17.8L13.5 14L17.8 10.2V6.6Z" fill="#f2f6fc" stroke="#8fb2de" stroke-width="1.2"/><path d="M9.6 8.2H16.4Q15.8 11 13 13.2Q10.2 11 9.6 8.2Z" fill="#e9d29e"/><path d="M9.2 21.2Q10.2 18.9 13 18.7Q15.8 18.9 16.8 21.2Z" fill="#dfb87c"/><rect x="6.6" y="4" width="12.4" height="2.6" rx="0.6" fill="#a4561a"/><rect x="7.5" y="4.8" width="10.6" height="0.9" fill="#cf8c4a"/><rect x="6.6" y="21.3" width="12.4" height="2.6" rx="0.6" fill="#a4561a"/><rect x="7.5" y="22.1" width="10.6" height="0.9" fill="#cf8c4a"/></svg>
</div><div class="t desc">TM59 KPI Script Example - Optimisation, Gen 2, Run 42</div><div class="t fn">TM59 Parametric Analysis Tutorial Model AT T...</div><div class="pb"><div class="pg" style="width:195px"></div><div class="pt">Simulating... 59%</div></div><div class="t st">2023-06-09 19:08:08</div><div class="t du">00:01:01</div><div class="t lo">local</div></div><div class="row" style="top:626px"><div class="ic0"><svg width="32" height="24" viewBox="0 0 32 24"><path d="M12.2 7.4C8 7.2 4.8 9.6 5.4 12.6C5.8 14.4 7.8 15.6 10.4 16.2M21.6 12.6C24.8 13.8 25.4 16.6 23.2 18.4C21.6 19.5 19.2 19.8 16.6 19.4" stroke="#2a7d3c" stroke-width="1.6" fill="none"/><ellipse cx="16.4" cy="10.6" rx="2" ry="1.3" fill="#1f7fc0"/><path d="M20.2 5.6L18.8 16.2" stroke="#1a7ec2" stroke-width="2.2" fill="none"/><path d="M19 10.5H24.8" stroke="#1a7ec2" stroke-width="2.4" fill="none"/><path d="M11.2 13.3L18.8 11.9C19.4 9.1 17.6 8.3 15.8 8.3C12.5 8.5 10.5 11.5 10.5 14.6C10.5 17.4 12.6 18.2 14.4 18.1C16 18 17.6 17.5 19.2 16.7" stroke="#c63a2c" stroke-width="2.9" fill="none"/></svg>
</div><div class="ic1 hg"><svg width="26" height="28" viewBox="0 0 26 28"><path d="M8.2 6.6V10.2L12.5 14L8.2 17.8V21.4H17.8V17.8L13.5 14L17.8 10.2V6.6Z" fill="#f2f6fc" stroke="#8fb2de" stroke-width="1.2"/><path d="M9.6 8.2H16.4Q15.8 11 13 13.2Q10.2 11 9.6 8.2Z" fill="#e9d29e"/><path d="M9.2 21.2Q10.2 18.9 13 18.7Q15.8 18.9 16.8 21.2Z" fill="#dfb87c"/><rect x="6.6" y="4" width="12.4" height="2.6" rx="0.6" fill="#a4561a"/><rect x="7.5" y="4.8" width="10.6" height="0.9" fill="#cf8c4a"/><rect x="6.6" y="21.3" width="12.4" height="2.6" rx="0.6" fill="#a4561a"/><rect x="7.5" y="22.1" width="10.6" height="0.9" fill="#cf8c4a"/></svg>
</div><div class="t desc">TM59 KPI Script Example - Optimisation, Gen 2, Run 41</div><div class="t fn">TM59 Parametric Analysis Tutorial Model AT T...</div><div class="pb"><div class="pg" style="width:212px"></div><div class="pt">Simulating... 64%</div></div><div class="t st">2023-06-09 19:08:06</div><div class="t du">00:01:03</div><div class="t lo">local</div></div><div class="row alt" style="top:658px"><div class="ic0"><svg width="32" height="24" viewBox="0 0 32 24"><path d="M12.2 7.4C8 7.2 4.8 9.6 5.4 12.6C5.8 14.4 7.8 15.6 10.4 16.2M21.6 12.6C24.8 13.8 25.4 16.6 23.2 18.4C21.6 19.5 19.2 19.8 16.6 19.4" stroke="#2a7d3c" stroke-width="1.6" fill="none"/><ellipse cx="16.4" cy="10.6" rx="2" ry="1.3" fill="#1f7fc0"/><path d="M20.2 5.6L18.8 16.2" stroke="#1a7ec2" stroke-width="2.2" fill="none"/><path d="M19 10.5H24.8" stroke="#1a7ec2" stroke-width="2.4" fill="none"/><path d="M11.2 13.3L18.8 11.9C19.4 9.1 17.6 8.3 15.8 8.3C12.5 8.5 10.5 11.5 10.5 14.6C10.5 17.4 12.6 18.2 14.4 18.1C16 18 17.6 17.5 19.2 16.7" stroke="#c63a2c" stroke-width="2.9" fill="none"/></svg>
</div><div class="ic1 hg"><svg width="26" height="28" viewBox="0 0 26 28"><path d="M8.2 6.6V10.2L12.5 14L8.2 17.8V21.4H17.8V17.8L13.5 14L17.8 10.2V6.6Z" fill="#f2f6fc" stroke="#8fb2de" stroke-width="1.2"/><path d="M9.6 8.2H16.4Q15.8 11 13 13.2Q10.2 11 9.6 8.2Z" fill="#e9d29e"/><path d="M9.2 21.2Q10.2 18.9 13 18.7Q15.8 18.9 16.8 21.2Z" fill="#dfb87c"/><rect x="6.6" y="4" width="12.4" height="2.6" rx="0.6" fill="#a4561a"/><rect x="7.5" y="4.8" width="10.6" height="0.9" fill="#cf8c4a"/><rect x="6.6" y="21.3" width="12.4" height="2.6" rx="0.6" fill="#a4561a"/><rect x="7.5" y="22.1" width="10.6" height="0.9" fill="#cf8c4a"/></svg>
</div><div class="t desc">TM59 KPI Script Example - Optimisation, Gen 2, Run 40</div><div class="t fn">TM59 Parametric Analysis Tutorial Model AT T...</div><div class="pb"><div class="pg" style="width:225px"></div><div class="pt">Simulating... 68%</div></div><div class="t st">2023-06-09 19:08:04</div><div class="t du">00:01:05</div><div class="t lo">local</div></div><div id="sb"><svg width="21" height="22" style="position:absolute;left:0;top:0"><path d="M6 13.5L10.5 9L15 13.5" fill="none" stroke="#a0a0a0" stroke-width="1.3"/></svg><div id="thumb"></div></div></div></body></html>
